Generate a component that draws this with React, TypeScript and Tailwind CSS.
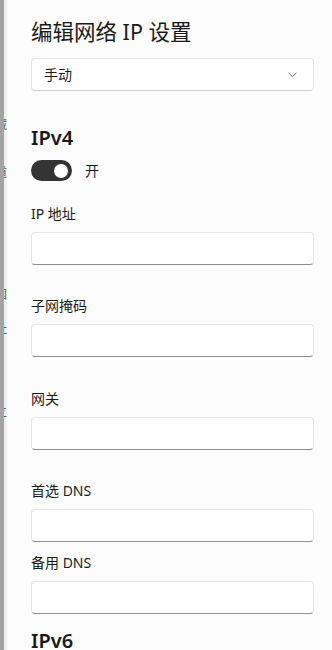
import React from "react";

const font = { fontFamily: '"Noto Sans", "Noto Sans CJK SC", sans-serif' };

function Field({ label, trailing }: { label: string; trailing: string }) {
  return (
    <div className={trailing}>
      <div className="text-[14px] leading-[20px] text-[#1b1b1b] mb-[8px]">{label}</div>
      <div className="h-[33px] bg-white rounded-[4px] border border-[#e6e6e6] border-b-[#8f8f8f]" />
    </div>
  );
}

function Frag({ ch, h }: { ch: string; h: string }) {
  return (
    <div className={`${h} flex justify-end items-start overflow-hidden`}>
      <span className="text-[12px] leading-[14px] text-[#5a5a5a] whitespace-nowrap">{ch}</span>
    </div>
  );
}

export default function App() {
  return (
    <div className="w-[332px] h-[650px] flex overflow-hidden bg-white" style={font}>
      <div className="w-[4px] shrink-0 bg-[#a3a3a3]" />
      <div className="w-[3px] shrink-0 bg-[#efefef] overflow-hidden flex flex-col pt-[118px]">
        <Frag ch="藏" h="h-[48px]" />
        <Frag ch="道" h="h-[122px]" />
        <Frag ch="国" h="h-[34px]" />
        <Frag ch="址" h="h-[84px]" />
        <Frag ch="立" h="h-[20px]" />
      </div>
      <div className="flex-1 bg-[#fcfcfc] pl-[24px] pr-[18px] pt-[18px]">
        <div className="text-[21.5px] leading-[28px] text-[#1a1a1a]">编辑网络 IP 设置</div>
        <div className="mt-[12px] h-[33px] bg-white rounded-[4px] border border-[#e6e6e6] border-b-[#cfcfcf] flex items-center justify-between pl-[12px] pr-[16px]">
          <span className="text-[14px] leading-[20px] text-[#1b1b1b]">手动</span>
          <svg width="9" height="6" viewBox="0 0 9 6" fill="none">
            <path d="M1 1.2 L4.5 4.6 L8 1.2" stroke="#6b6b6b" strokeWidth="1" strokeLinecap="round" strokeLinejoin="round" />
          </svg>
        </div>
        <div className="mt-[33px] text-[20px] leading-[28px] font-semibold text-[#1a1a1a]">IPv4</div>
        <div className="mt-[8px] flex items-center">
          <div className="w-[41px] h-[21px] rounded-full bg-[#343434] flex items-center justify-end pr-[4px]">
            <div className="w-[14px] h-[14px] rounded-full bg-white" />
          </div>
          <span className="ml-[13px] text-[14px] leading-[20px] text-[#1b1b1b]">开</span>
        </div>
        <div className="mt-[23px]">
          <Field label="IP 地址" trailing="mb-[31px]" />
          <Field label="子网掩码" trailing="mb-[32px]" />
          <Field label="网关" trailing="mb-[31px]" />
          <Field label="首选 DNS" trailing="mb-[11px]" />
          <Field label="备用 DNS" trailing="mb-[13px]" />
        </div>
        <div className="text-[20px] leading-[28px] font-semibold text-[#1a1a1a]">IPv6</div>
      </div>
    </div>
  );
}
